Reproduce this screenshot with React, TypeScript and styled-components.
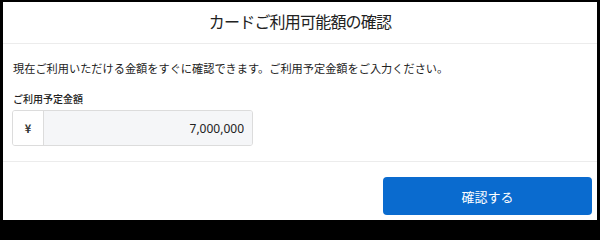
import React from 'react';
import styled, { createGlobalStyle } from 'styled-components';

const GlobalStyle = createGlobalStyle`
    html, body {
        margin: 0;
        padding: 0;
        background: #000;
    }
    body {
        font-family: 'Noto Sans CJK JP', 'Noto Sans', sans-serif;
        color: #333;
    }
`;

const Frame = styled.div`
    width: 600px;
    height: 224px;
    box-sizing: border-box;
    border-style: solid;
    border-color: #000;
    border-width: 2px 3px 4px 3px;
    background: #fff;
    display: flex;
    flex-direction: column;
`;

const Header = styled.div`
    height: 42px;
    box-sizing: border-box;
    padding-bottom: 3px;
    display: flex;
    align-items: center;
    justify-content: center;
    border-bottom: 1px solid #ececec;
`;

const Title = styled.h5`
    margin: 0;
    font-size: 16px;
    font-weight: 400;
    letter-spacing: -0.8px;
    color: #222;
`;

const Body = styled.div`
    padding: 16px 10px 15px 9px;
    border-bottom: 1px solid #ececec;
    display: flex;
    flex-direction: column;
`;

const Lead = styled.p`
    margin: 0 0 0 1px;
    font-size: 11.2px;
    line-height: 16px;
    color: #222;
`;

const FieldLabel = styled.label`
    margin: 16px 0 4px 1px;
    font-size: 10px;
    line-height: 14px;
    font-weight: 500;
    color: #222;
`;

const InputGroup = styled.div`
    display: flex;
    width: 241px;
    height: 36px;
    box-sizing: border-box;
    border: 1px solid #dcdcdc;
    border-radius: 3px;
    overflow: hidden;
`;

const Addon = styled.span`
    width: 30px;
    display: flex;
    align-items: center;
    justify-content: center;
    background: #fff;
    border-right: 1px solid #dcdcdc;
    font-size: 11px;
    font-weight: 700;
    color: #333;
`;

const AmountInput = styled.input`
    flex: 1;
    min-width: 0;
    border: none;
    outline: none;
    background: #f5f6f8;
    text-align: right;
    padding: 0 8px 0 0;
    font-family: 'Noto Sans', sans-serif;
    font-size: 12px;
    color: #222;
`;

const Footer = styled.div`
    flex: 1;
    display: flex;
    justify-content: flex-end;
    align-items: flex-start;
    padding: 15px 5px 0 0;
`;

const PrimaryButton = styled.button`
    width: 209px;
    height: 38px;
    border: none;
    border-radius: 4px;
    background: #0a6bcf;
    color: #fff;
    font-family: 'Noto Sans CJK JP', sans-serif;
    font-size: 13px;
    cursor: pointer;
`;

const App = () => {
    return (
        <>
            <GlobalStyle />
            <Frame>
                <Header>
                    <Title>カードご利用可能額の確認</Title>
                </Header>
                <Body>
                    <Lead>
                        現在ご利用いただける金額をすぐに確認できます。ご利用予定金額をご入力ください。
                    </Lead>
                    <FieldLabel>ご利用予定金額</FieldLabel>
                    <InputGroup>
                        <Addon>¥</Addon>
                        <AmountInput defaultValue="7,000,000" />
                    </InputGroup>
                </Body>
                <Footer>
                    <PrimaryButton>確認する</PrimaryButton>
                </Footer>
            </Frame>
        </>
    );
};

export default App;
